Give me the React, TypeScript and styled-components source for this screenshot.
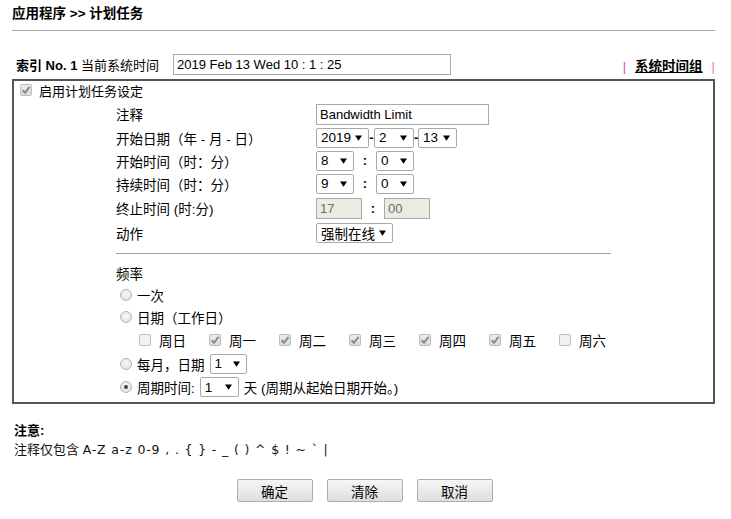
import React from "react";
import styled, { createGlobalStyle } from "styled-components";

const GlobalStyle = createGlobalStyle`
  html, body {
    margin: 0;
    padding: 0;
    background: #fff;
  }
  body {
    font-family: "Liberation Sans", Arial, "Noto Sans CJK SC", sans-serif;
    font-size: 13px;
    color: #000;
  }
`;

const Page = styled.div`
  width: 731px;
  padding: 0 16px 0 12px;
  box-sizing: border-box;
`;

const Title = styled.div`
  padding-top: 5px;
  height: 18px;
  line-height: 18px;
  font-weight: bold;
  font-size: 13.5px;
`;

const Rule = styled.div`
  margin-top: 7px;
  height: 1px;
  background: #a8a8a8;
`;

const IndexRow = styled.div`
  margin-top: 22px;
  height: 22px;
  display: flex;
  align-items: center;
  padding: 0 4px;
`;

const IndexLabel = styled.div`
  width: 157px;
  white-space: nowrap;
  b {
    font-weight: bold;
  }
`;

const TextInput = styled.div<{ $w: number; $disabled?: boolean }>`
  width: ${(p) => p.$w}px;
  height: 21px;
  box-sizing: border-box;
  border: 1px solid #a9a9a9;
  background: ${(p) => (p.$disabled ? "#ebebe4" : "#fff")};
  color: ${(p) => (p.$disabled ? "#6d6d6d" : "#000")};
  padding-left: 3px;
  line-height: 19px;
  font-size: 13px;
  white-space: nowrap;
`;

const LinkGroup = styled.div`
  margin-left: auto;
  margin-right: -4px;
  align-self: flex-end;
  display: flex;
  align-items: center;
  gap: 9px;
  line-height: 16px;
`;

const Bar = styled.span<{ $c: string }>`
  color: ${(p) => p.$c};
  font-weight: normal;
`;

const Link = styled.a`
  font-weight: bold;
  font-size: 13.5px;
  color: #000;
  text-decoration: underline;
`;

const Box = styled.div`
  margin-top: 4px;
  border: 2px solid #555;
  height: 325px;
  box-sizing: border-box;
`;

const EnableRow = styled.div`
  height: 18px;
  display: flex;
  align-items: center;
  padding-left: 6px;
  gap: 7px;
`;

const Fields = styled.div`
  margin-top: 3px;
  padding-left: 102px;
`;

const Row = styled.div<{ $h: number }>`
  height: ${(p) => p.$h}px;
  display: flex;
  align-items: center;
`;

const Label = styled.div`
  width: 200px;
  white-space: nowrap;
  font-size: 13.5px;
`;

const Controls = styled.div`
  display: flex;
  align-items: center;
`;

const Sep = styled.span<{ $w: number }>`
  width: ${(p) => p.$w}px;
  text-align: center;
  font-weight: bold;
`;

const Divider = styled.div`
  margin-top: 9px;
  width: 495px;
  height: 1px;
  background: #a0a0a0;
`;

const SelectBox = styled.div<{ $w: number }>`
  width: ${(p) => p.$w}px;
  height: 20px;
  box-sizing: border-box;
  border: 1px solid #a9a9a9;
  border-radius: 2px;
  background: #fff;
  display: flex;
  align-items: center;
  justify-content: space-between;
  padding: 0 6px 0 4px;
  font-size: 13.5px;
  white-space: nowrap;
`;

const Arrow = () => (
  <svg width="7" height="6" viewBox="0 0 7 6">
    <path d="M0 0.5 L7 0.5 L3.5 5.8 Z" fill="#000" />
  </svg>
);

const Select = ({ w, value }: { w: number; value: string }) => (
  <SelectBox $w={w}>
    <span>{value}</span>
    <Arrow />
  </SelectBox>
);

const CheckBox = styled.span<{ $on?: boolean }>`
  width: 12px;
  height: 12px;
  box-sizing: border-box;
  border: 1px solid #bdbdbd;
  border-radius: 2px;
  background: ${(p) => (p.$on ? "linear-gradient(#ececec, #dcdcdc)" : "#f2f2f2")};
  display: inline-flex;
  align-items: center;
  justify-content: center;
  flex: none;
`;

const Check = ({ on }: { on?: boolean }) => (
  <CheckBox $on={on}>
    {on && (
      <svg width="10" height="10" viewBox="0 0 10 10">
        <path d="M1.5 5.2 L4 7.8 L8.6 1.8" stroke="#8a8a8a" strokeWidth="2" fill="none" />
      </svg>
    )}
  </CheckBox>
);

const RadioCircle = styled.span<{ $on?: boolean }>`
  width: 12px;
  height: 12px;
  box-sizing: border-box;
  border-radius: 50%;
  border: 1px solid #b5b5b5;
  background: radial-gradient(circle at 50% 40%, #f8f8f8, #dcdcdc);
  display: inline-flex;
  align-items: center;
  justify-content: center;
  flex: none;
  &::after {
    content: "";
    display: ${(p) => (p.$on ? "block" : "none")};
    width: 4px;
    height: 4px;
    border-radius: 50%;
    background: #444;
  }
`;

const Freq = styled.div`
  margin-top: 8px;
  height: 22px;
  display: flex;
  align-items: center;
  font-size: 13.5px;
`;

const RadioRow = styled.div<{ $h: number }>`
  height: ${(p) => p.$h}px;
  display: flex;
  align-items: center;
  padding-left: 4px;
  gap: 5px;
  white-space: nowrap;
  font-size: 13.5px;
`;

const Weekdays = styled.div`
  height: 24px;
  display: flex;
  align-items: center;
  padding-left: 23px;
  font-size: 13.5px;
`;

const Day = styled.div`
  width: 70px;
  display: flex;
  align-items: center;
  gap: 8px;
`;

const Note = styled.div`
  margin-top: 17px;
  padding-left: 2px;
  line-height: 19px;
  color: #111;
`;

const NoteTitle = styled.div`
  font-weight: bold;
  color: #000;
`;

const NoteText = styled.div`
  white-space: pre;
  span {
    font-family: "DejaVu Sans", Verdana, sans-serif;
    font-size: 12.5px;
    letter-spacing: 0.85px;
  }
`;

const Buttons = styled.div`
  margin-top: 20px;
  display: flex;
  justify-content: center;
  gap: 14px;
  padding-left: 2px;
`;

const Button = styled.button`
  width: 76px;
  height: 23px;
  border: 1px solid #adadad;
  border-radius: 2px;
  background: linear-gradient(#f6f6f6, #dedede);
  font-family: inherit;
  font-size: 13.5px;
  color: #000;
  padding: 0;
`;

const days = [
  { name: "周日", on: false },
  { name: "周一", on: true },
  { name: "周二", on: true },
  { name: "周三", on: true },
  { name: "周四", on: true },
  { name: "周五", on: true },
  { name: "周六", on: false },
];

export default function App() {
  return (
    <Page>
      <GlobalStyle />
      <Title>应用程序 &gt;&gt; 计划任务</Title>
      <Rule />
      <IndexRow>
        <IndexLabel>
          <b>索引 No. 1</b> 当前系统时间
        </IndexLabel>
        <TextInput $w={278}>2019 Feb 13 Wed 10 : 1 : 25</TextInput>
        <LinkGroup>
          <Bar $c="#e8508a">|</Bar>
          <Link>系统时间组</Link>
          <Bar $c="#ee7a80">|</Bar>
        </LinkGroup>
      </IndexRow>
      <Box>
        <EnableRow>
          <Check on />
          <span>启用计划任务设定</span>
        </EnableRow>
        <Fields>
          <Row $h={24}>
            <Label>注释</Label>
            <TextInput $w={173}>Bandwidth Limit</TextInput>
          </Row>
          <Row $h={23}>
            <Label>开始日期（年 - 月 - 日）</Label>
            <Controls>
              <Select w={53} value="2019" />
              <Sep $w={5}>-</Sep>
              <Select w={40} value="2" />
              <Sep $w={4}>-</Sep>
              <Select w={39} value="13" />
            </Controls>
          </Row>
          <Row $h={23}>
            <Label>开始时间（时：分）</Label>
            <Controls>
              <Select w={38} value="8" />
              <Sep $w={22}>:</Sep>
              <Select w={38} value="0" />
            </Controls>
          </Row>
          <Row $h={23}>
            <Label>持续时间（时：分）</Label>
            <Controls>
              <Select w={38} value="9" />
              <Sep $w={22}>:</Sep>
              <Select w={38} value="0" />
            </Controls>
          </Row>
          <Row $h={26}>
            <Label>终止时间 (时:分)</Label>
            <Controls>
              <TextInput $w={46} $disabled>
                17
              </TextInput>
              <Sep $w={22}>:</Sep>
              <TextInput $w={46} $disabled>
                00
              </TextInput>
            </Controls>
          </Row>
          <Row $h={23}>
            <Label>动作</Label>
            <Select w={77} value="强制在线" />
          </Row>
          <Divider />
          <Freq>频率</Freq>
          <RadioRow $h={22}>
            <RadioCircle />
            一次
          </RadioRow>
          <RadioRow $h={22}>
            <RadioCircle />
            日期（工作日）
          </RadioRow>
          <Weekdays>
            {days.map((d) => (
              <Day key={d.name}>
                <Check on={d.on} />
                <span>{d.name}</span>
              </Day>
            ))}
          </Weekdays>
          <RadioRow $h={23}>
            <RadioCircle />
            每月，日期
            <Select w={37} value="1" />
          </RadioRow>
          <RadioRow $h={24}>
            <RadioCircle $on />
            周期时间:
            <Select w={39} value="1" />
            天 (周期从起始日期开始。)
          </RadioRow>
        </Fields>
      </Box>
      <Note>
        <NoteTitle>注意:</NoteTitle>
        <NoteText>
          注释仅包含 <span>A-Z a-z 0-9 , . {"{"} {"}"} - _ ( ) ^ $ ! ~ ` |</span>
        </NoteText>
      </Note>
      <Buttons>
        <Button>确定</Button>
        <Button>清除</Button>
        <Button>取消</Button>
      </Buttons>
    </Page>
  );
}
